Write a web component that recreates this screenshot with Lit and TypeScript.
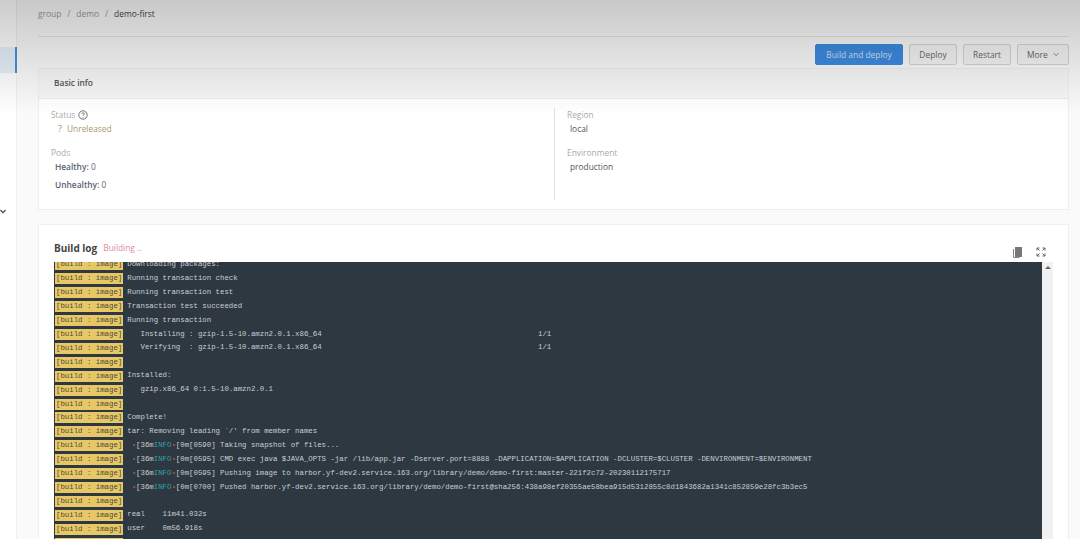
import { LitElement, html, css } from "lit";
import { customElement } from "lit/decorators.js";

type Line = string | { info: true; rest: string };
const lines: Line[] = [
  "Downloading packages:",
  "Running transaction check",
  "Running transaction test",
  "Transaction test succeeded",
  "Running transaction",
  "   Installing : gzip-1.5-10.amzn2.0.1.x86_64                                                 1/1",
  "   Verifying  : gzip-1.5-10.amzn2.0.1.x86_64                                                 1/1",
  "",
  "Installed:",
  "   gzip.x86_64 0:1.5-10.amzn2.0.1",
  "",
  "Complete!",
  "tar: Removing leading `/' from member names",
  { info: true, rest: "[0590] Taking snapshot of files..." },
  { info: true, rest: "[0595] CMD exec java $JAVA_OPTS -jar /lib/app.jar -Dserver.port=8888 -DAPPLICATION=$APPLICATION -DCLUSTER=$CLUSTER -DENVIRONMENT=$ENVIRONMENT" },
  { info: true, rest: "[0595] Pushing image to harbor.yf-dev2.service.163.org/library/demo/demo-first:master-221f2c72-20230112175717" },
  { info: true, rest: "[0700] Pushed harbor.yf-dev2.service.163.org/library/demo/demo-first@sha256:438a98ef20355ae58bea915d5312855c8d1843682a1341c852859e28fc3b3ec5" },
  "",
  "real    11m41.032s",
  "user    0m56.918s",
  "sys     0m3.073s",
];

@customElement("app-root")
export class AppRoot extends LitElement {
  static styles = css`
    :host {
      display: block;
      position: relative;
      height: 539px;
      overflow: hidden;
      background: #fff;
      font-family: "Open Sans", "Noto Sans", sans-serif;
      font-size: 8.4px;
      color: #555;
    }
    .page { display: flex; height: 539px; }
    .side {
      width: 17px;
      flex: none;
      border-right: 1px solid #f0f0f0;
      box-sizing: border-box;
      padding-top: 47px;
      display: flex;
      flex-direction: column;
    }
    .active {
      height: 26px;
      background: #e6f1fb;
      border-right: 2px solid #4a90d9;
      margin-right: -1px;
    }
    .caret { margin-top: 136px; width: 6px; height: 5px; display: block; }
    .main {
      flex: 1;
      min-width: 0;
      background: #fafafa;
      padding: 0 11px 0 21px;
      display: flex;
      flex-direction: column;
    }
    .crumb {
      height: 37px;
      flex: none;
      box-sizing: border-box;
      padding-top: 7px;
      line-height: 13px;
      border-bottom: 1px solid #e4e4e4;
      color: #999;
      display: flex;
      gap: 6px;
    }
    .crumb b { font-weight: 400; color: #444; }
    .actions {
      display: flex;
      justify-content: flex-end;
      gap: 6px;
      padding: 7px 0 3px;
      flex: none;
    }
    button {
      font: inherit;
      height: 21px;
      box-sizing: border-box;
      border: 1px solid #d4d4d4;
      border-radius: 2px;
      background: #f4f4f4;
      color: #666;
      padding: 0 9px;
      display: flex;
      align-items: center;
      justify-content: center;
      gap: 5px;
      width: 48px;
    }
    button.primary {
      background: #3d8ae0;
      border-color: #3d8ae0;
      color: #cfe2f6;
      width: 88px;
    }
    button.more { width: 52px; }
    .card { background: #fff; border: 1px solid #efefef; }
    .basic { height: 142px; box-sizing: border-box; flex: none; }
    .card-head {
      height: 30px;
      box-sizing: border-box;
      padding: 0 15px 2px;
      display: flex;
      align-items: center;
      background: #f7f7f7;
      border-bottom: 1px solid #ededed;
      font-weight: 600;
      color: #555;
    }
    .cols { display: flex; padding-top: 9px; }
    .col { width: 515px; height: 92px; padding-left: 12px; box-sizing: border-box; }
    .col + .col { border-left: 1px solid #e2e2e2; padding-left: 12px; width: auto; flex: 1; }
    .lbl { color: #aaa; line-height: 13px; display: flex; align-items: center; gap: 3px; }
    .val { line-height: 13px; padding: 1px 0 0 3px; color: #555; margin-bottom: 11px; display: flex; }
    .unrel { color: #a89a6a; padding-left: 5px; gap: 3px; }
    .q { font-size: 9px; color: #b58a3c; width: 8px; text-align: center; }
    .pod { line-height: 13px; margin: 1px 0 0 4px; color: #666; }
    .pod strong { font-weight: 600; color: #5a6472; }
    .pod + .pod { margin-top: 5px; }
    .log {
      margin-top: 14px;
      flex: 1;
      min-height: 0;
      border-bottom: none;
      padding: 0 15px;
      display: flex;
      flex-direction: column;
    }
    .log-head {
      height: 37px;
      flex: none;
      display: flex;
      align-items: flex-end;
      gap: 6px;
      padding-bottom: 8px;
      box-sizing: border-box;
      line-height: 12px;
    }
    .log-head strong { font-size: 10px; font-weight: 700; color: #444; }
    .building { color: #e0899f; font-size: 8.4px; }
    .tools { margin-left: auto; display: flex; gap: 13px; align-items: center; margin-bottom: -4px; margin-right: 7px; }
    .term-wrap { flex: 1; min-height: 0; display: flex; }
    .term {
      flex: 1;
      min-width: 0;
      background: #2e3841;
      overflow: hidden;
      font-family: "Liberation Mono", "DejaVu Sans Mono", monospace;
      font-size: 7.36px;
      color: #c9ced2;
      white-space: pre;
    }
    .row { height: 13.92px; line-height: 13.92px; display: flex; padding-left: 1px; }
    .row:first-child { margin-top: -4px; }
    .tag { background: #e8c866; color: #4a4a3a; padding: 0 1px; line-height: 11px; height: 11px; align-self: center; margin-right: 4px; }
    .esc { color: #c0444f; }
    .cyan { color: #2aa5a8; }
    .scroll { width: 11px; background: #f1f1f1; flex: none; position: relative; }
    .scroll::before {
      content: "";
      position: absolute;
      top: 4px;
      left: 3px;
      border: 3px solid transparent;
      border-top: none;
      border-bottom: 3px solid #666;
    }
    .shade {
      position: absolute;
      left: 0;
      right: 0;
      top: 0;
      height: 115px;
      pointer-events: none;
      background: linear-gradient(to bottom, rgba(0,0,0,.2), rgba(0,0,0,0));
    }
  `;

  private renderLine(l: Line) {
    const tag = html`<span class="tag">[build : image]</span>`;
    if (typeof l === "string") return html`<div class="row">${tag}<span>${l}</span></div>`;
    return html`<div class="row">${tag}<span> <span class="esc">•</span>[36m<span class="cyan">INFO</span><span class="esc">•</span>[0m${l.rest}</span></div>`;
  }

  render() {
    return html`
      <div class="page">
        <aside class="side">
          <div class="active"></div>
          <svg class="caret" viewBox="0 0 6 5"><path d="M.5 1 3 3.6 5.5 1" fill="none" stroke="#444" stroke-width="1.2"/></svg>
        </aside>
        <main class="main">
          <nav class="crumb"><span>group</span><span>/</span><span>demo</span><span>/</span><b>demo-first</b></nav>
          <div class="actions">
            <button class="primary">Build and deploy</button>
            <button>Deploy</button>
            <button>Restart</button>
            <button class="more">More
              <svg width="7" height="5" viewBox="0 0 7 5"><path d="M.8 1 3.5 3.8 6.2 1" fill="none" stroke="#777" stroke-width="1"/></svg>
            </button>
          </div>
          <section class="card basic">
            <div class="card-head">Basic info</div>
            <div class="cols">
              <div class="col">
                <div class="lbl">Status
                  <svg width="10" height="10" viewBox="0 0 10 10"><circle cx="5" cy="5" r="4.2" fill="none" stroke="#666" stroke-width=".9"/><path d="M3.700 4c0-1.700 2.700-1.700 2.700 0 0 1-1.400 1-1.400 2M5 7v.8" fill="none" stroke="#666" stroke-width=".8"/></svg>
                </div>
                <div class="val unrel"><span class="q">?</span><span>Unreleased</span></div>
                <div class="lbl">Pods</div>
                <div class="pod"><strong>Healthy:</strong> 0</div>
                <div class="pod"><strong>Unhealthy:</strong> 0</div>
              </div>
              <div class="col">
                <div class="lbl">Region</div>
                <div class="val">local</div>
                <div class="lbl">Environment</div>
                <div class="val">production</div>
              </div>
            </div>
          </section>
          <section class="card log">
            <div class="log-head">
              <strong>Build log</strong><span class="building">Building ..</span>
              <span class="tools">
                <svg width="11" height="12" viewBox="0 0 11 12"><path d="M3 1h7v10H3z" fill="#777"/><path d="M1.500 3v8.500h6" fill="none" stroke="#888" stroke-width="1"/></svg>
                <svg width="10" height="10" viewBox="0 0 10 10"><path d="M1 3.500V1h2.500M9 3.500V1H6.500M1 6.500V9h2.500M9 6.500V9H6.500M1 1l2.500 2.500M9 1 6.500 3.500M1 9l2.500-2.500M9 9 6.500 6.500" fill="none" stroke="#666" stroke-width="1"/></svg>
              </span>
            </div>
            <div class="term-wrap">
              <div class="term">${lines.map((l) => this.renderLine(l))}</div>
              <div class="scroll"></div>
            </div>
          </section>
        </main>
      </div>
      <div class="shade"></div>
    `;
  }
}
